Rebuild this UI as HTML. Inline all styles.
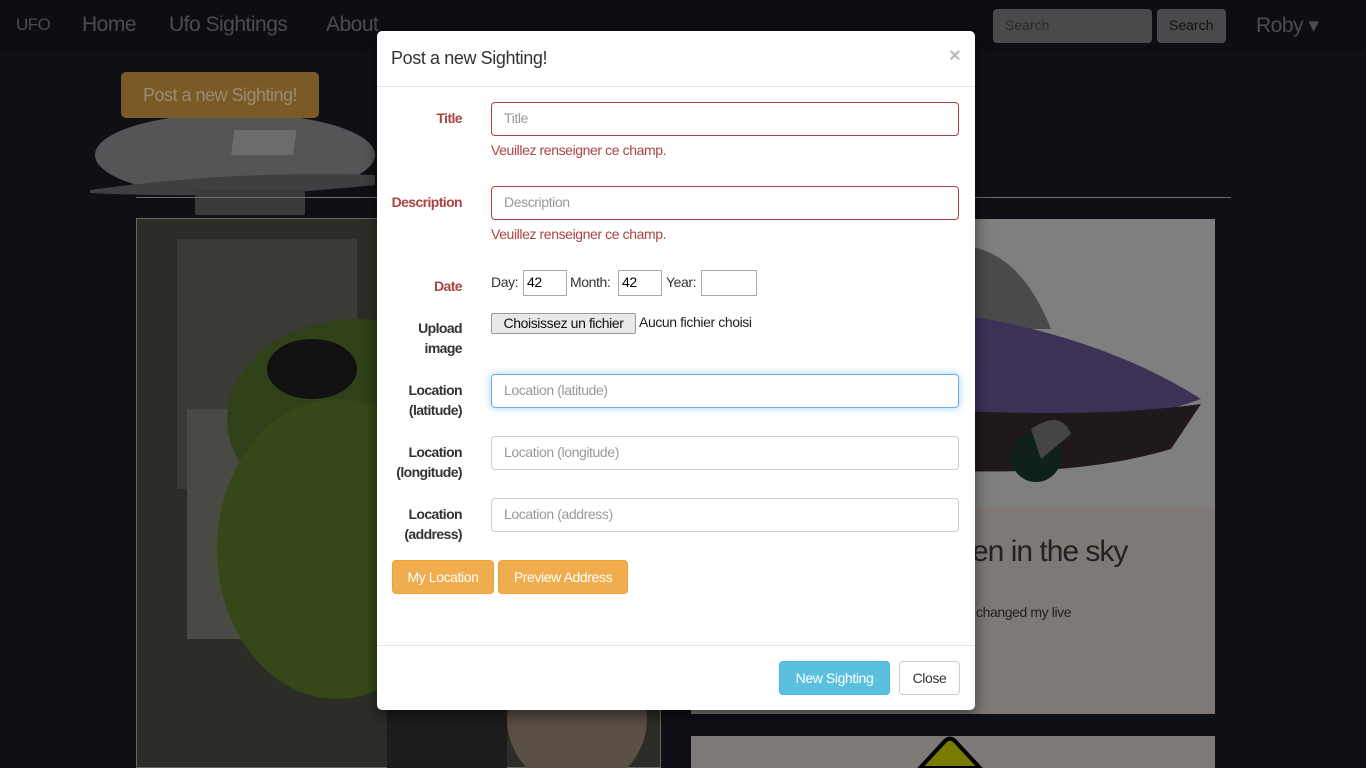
<!DOCTYPE html>
<html><head><style>
*{box-sizing:border-box}
html,body{background:#0f1015}
body{margin:0;width:1366px;height:768px;overflow:hidden;font-family:"Liberation Sans",sans-serif;position:relative}
.a{position:absolute}
.nav{color:#4a4c52;font-size:21px;letter-spacing:-0.5px}
.modal{left:377px;top:31px;width:598px;height:679px;background:#fff;border-radius:5px;box-shadow:0 5px 15px rgba(0,0,0,.5);letter-spacing:-0.4px}
.lbl{position:absolute;width:80px;text-align:right;font-weight:bold;font-size:14px;color:#333;line-height:20px;letter-spacing:-0.6px}
.red{color:#a94442}
.inp{position:absolute;left:114px;width:468px;height:34px;border:1px solid #ccc;border-radius:4px;font-size:14px;color:#999;padding:7px 12px}
.err{position:absolute;left:114px;font-size:14px;color:#a94442}
.btn{position:absolute;height:34px;border-radius:4px;font-size:14px;line-height:32px;text-align:center}
.small{position:absolute;height:26px;border:1px solid #a9a9a9;font-size:14px;padding:3px}
</style></head><body>
<div class="a" style="left:0;top:0;width:1366px;height:52px;background:#0d0e12"></div>
<div class="a nav" style="left:16px;top:15px;font-size:17px">UFO</div>
<div class="a nav" style="left:82px;top:13px">Home</div>
<div class="a nav" style="left:169px;top:13px">Ufo Sightings</div>
<div class="a nav" style="left:326px;top:13px">About</div>
<div class="a" style="left:993px;top:9px;width:159px;height:34px;background:#4a4a4c;border-radius:4px;color:#2a2a2c;font-size:14px;padding:8px 12px">Search</div>
<div class="a" style="left:1157px;top:9px;width:69px;height:34px;background:#4a4a4c;border-radius:4px;color:#111;font-size:14px;padding:8px 12px">Search</div>
<div class="a nav" style="left:1256px;top:13px">Roby ▾</div>
<svg class="a" style="left:85px;top:105px" width="300" height="115"><ellipse cx="150" cy="50" rx="140" ry="42" fill="#545557"/><path d="M5 85 Q150 65 290 70 L290 80 Q150 95 5 88Z" fill="#3e3f41"/><rect x="110" y="85" width="110" height="25" fill="#3a3a38"/><rect x="153" y="25" width="62" height="25" fill="#6b6c6e" transform="skewX(-8)"/></svg>
<div class="a" style="left:121px;top:72px;width:198px;height:46px;background:#7a5a26;border-radius:5px;color:#9a8c72;font-size:18px;line-height:46px;text-align:center;letter-spacing:-0.5px">Post a new Sighting!</div>
<div class="a" style="left:136px;top:197px;width:1095px;height:1px;background:#6c6c6e"></div>
<div class="a" style="left:136px;top:218px;width:525px;height:550px;border:1px solid #666;background:#2b2d26"></div>
<svg class="a" style="left:137px;top:219px" width="523" height="549"><rect x="40" y="20" width="180" height="250" fill="#3a3b35"/><rect x="50" y="190" width="90" height="230" fill="#4a4a44"/><ellipse cx="220" cy="200" rx="130" ry="100" fill="#304018"/><ellipse cx="200" cy="330" rx="120" ry="150" fill="#364817"/><ellipse cx="175" cy="150" rx="45" ry="30" fill="#111"/><circle cx="440" cy="500" r="70" fill="#5a5045"/><rect x="250" y="440" width="120" height="109" fill="#1c1c1c"/></svg>
<div class="a" style="left:691px;top:219px;width:524px;height:288px;background:#7f7f80"></div>
<svg class="a" style="left:691px;top:219px" width="524" height="288"><path d="M240 30 Q320 10 360 110 L260 110Z" fill="#4a4a4c"/><path d="M230 90 Q400 110 510 180 Q400 220 230 210Z" fill="#3b3256"/><path d="M230 190 Q400 200 510 185 L480 230 Q380 260 230 250Z" fill="#1f181d"/><circle cx="345" cy="238" r="25" fill="#10201a"/><path d="M340 210 Q370 190 380 215 L350 240Z" fill="#454547"/></svg>
<div class="a" style="left:691px;top:507px;width:524px;height:207px;background:#7e7876"></div>
<div class="a" style="left:972px;top:535px;font-size:30px;color:#222;letter-spacing:-1px">en in the sky</div>
<div class="a" style="left:976px;top:604px;font-size:14px;color:#222;letter-spacing:-0.4px">changed my live</div>
<div class="a" style="left:691px;top:736px;width:524px;height:32px;background:#7e7876"></div>
<svg class="a" style="left:910px;top:736px" width="80" height="32"><path d="M10 32 L35 5 Q40 0 45 5 L70 32Z" fill="#7a7a00" stroke="#000" stroke-width="4"/></svg>

<div class="a modal">
 <div class="a" style="left:14px;top:17px;font-size:18px;color:#333">Post a new Sighting!</div>
 <div class="a" style="left:572px;top:14px;font-size:20px;color:#bbb;font-weight:bold">×</div>
 <div class="a" style="left:0;top:55px;width:598px;height:1px;background:#e5e5e5"></div>
 <div class="lbl red" style="left:5px;top:77px">Title</div>
 <div class="inp" style="top:71px;border-color:#a94442">Title</div>
 <div class="err" style="top:111px">Veuillez renseigner ce champ.</div>
 <div class="lbl red" style="left:5px;top:161px">Description</div>
 <div class="inp" style="top:155px;border-color:#a94442">Description</div>
 <div class="err" style="top:195px">Veuillez renseigner ce champ.</div>
 <div class="lbl red" style="left:5px;top:245px">Date</div>
 <div class="a" style="left:114px;top:243px;font-size:14px;color:#333">Day:</div>
 <div class="small" style="left:118px;top:239px;left:146px;width:44px">42</div>
 <div class="a" style="left:193px;top:243px;font-size:14px;color:#333">Month:</div>
 <div class="small" style="left:241px;top:239px;width:44px">42</div>
 <div class="a" style="left:289px;top:243px;font-size:14px;color:#333">Year:</div>
 <div class="small" style="left:324px;top:239px;width:56px"></div>
 <div class="lbl" style="left:5px;top:287px">Upload image</div>
 <div class="a" style="left:114px;top:282px;width:145px;height:21px;border:1px solid #999;background:#e9e9e9;border-radius:2px;font-size:14px;color:#111;text-align:center;line-height:19px">Choisissez un fichier</div>
 <div class="a" style="left:262px;top:283px;font-size:14px;color:#222">Aucun fichier choisi</div>
 <div class="lbl" style="left:5px;top:349px">Location (latitude)</div>
 <div class="inp" style="top:343px;border-color:#66afe9;box-shadow:0 0 8px rgba(102,175,233,.6)">Location (latitude)</div>
 <div class="lbl" style="left:5px;top:411px">Location (longitude)</div>
 <div class="inp" style="top:405px">Location (longitude)</div>
 <div class="lbl" style="left:5px;top:473px">Location (address)</div>
 <div class="inp" style="top:467px">Location (address)</div>
 <div class="btn" style="left:15px;top:529px;width:102px;background:#f0ad4e;border:1px solid #eea236;color:#fff">My Location</div>
 <div class="btn" style="left:121px;top:529px;width:130px;background:#f0ad4e;border:1px solid #eea236;color:#fff">Preview Address</div>
 <div class="a" style="left:0;top:614px;width:598px;height:1px;background:#e5e5e5"></div>
 <div class="btn" style="left:402px;top:630px;width:111px;background:#5bc0de;border:1px solid #46b8da;color:#fff">New Sighting</div>
 <div class="btn" style="left:522px;top:630px;width:61px;background:#fff;border:1px solid #ccc;color:#333">Close</div>
</div>
</body></html>
